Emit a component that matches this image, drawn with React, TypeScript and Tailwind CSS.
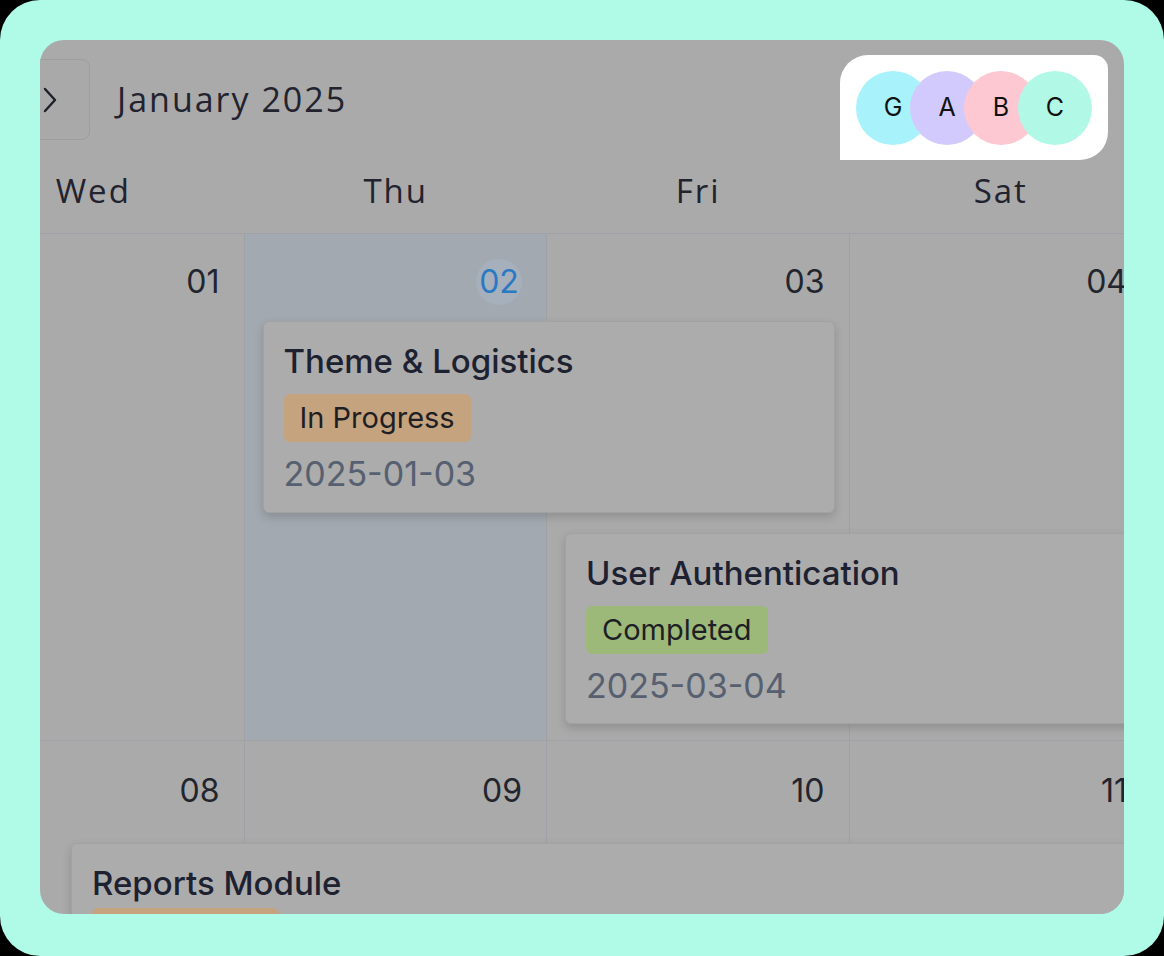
import React from "react";

type Status = "In Progress" | "Completed";

type CalEvent = {
  title: string;
  status: Status;
  date: string;
  className: string;
  badgeGap?: string;
};

const statusStyle: Record<Status, string> = {
  "In Progress": "bg-[#c6a37f]",
  Completed: "bg-[#9cb97a]",
};

const avatars = [
  { letter: "G", color: "bg-[#a8f2fb]" },
  { letter: "A", color: "bg-[#d2cafc]" },
  { letter: "B", color: "bg-[#fdc8d2]" },
  { letter: "C", color: "bg-[#b1f8e6]" },
];

const headFont = { fontFamily: '"Open Sans", "Noto Sans", sans-serif' };
const bodyFont = { fontFamily: 'Inter, "Noto Sans", sans-serif' };

function EventCard({ event }: { event: CalEvent }) {
  return (
    <div
      className={`flex flex-col rounded-[6px] border border-[#a2a2a2] bg-[#acacac] px-[20px] pt-[19px] pb-[20px] shadow-[0_4px_10px_rgba(0,0,0,0.16)] ${event.className}`}
    >
      <div className="text-[33px] leading-[40px] font-medium text-[#1d2130]">{event.title}</div>
      <div className={`${event.badgeGap ?? "mt-[13px]"} flex`}>
        <span
          className={`rounded-[6px] px-[16px] text-[29px] leading-[48px] text-[#1e1f24] ${statusStyle[event.status]}`}
        >
          {event.status}
        </span>
      </div>
      <div className="mt-[12px] text-[34px] leading-[40px] text-[#566070]">{event.date}</div>
    </div>
  );
}

function DayNumber({ n, today, top }: { n: string; today?: boolean; top: string }) {
  return (
    <div className={`flex justify-end pr-[24px] ${top}`}>
      <span
        className={`flex h-[46px] items-center justify-center text-[32px] ${
          today ? "w-[46px] rounded-full bg-[#a5b0bc] text-[#2b79c2]" : "text-[#22252e]"
        }`}
      >
        {n}
      </span>
    </div>
  );
}

function Week({
  days,
  todayIndex,
  rows,
  events,
  height,
  top,
  last,
}: {
  days: string[];
  todayIndex?: number;
  rows: string;
  events: CalEvent[];
  height: string;
  top: string;
  last?: boolean;
}) {
  return (
    <div
      className={`grid grid-cols-[repeat(4,302.5px)] ${rows} ${height} ${last ? "" : "border-b border-[#9ea1a5]"}`}
    >
      {days.map((d, i) => (
        <div
          key={d}
          className={`row-span-full border-r border-[#9ea1a5] ${i === todayIndex ? "bg-[#a3a9b0]" : ""}`}
          style={{ gridColumnStart: i + 1, gridRowStart: 1 }}
        >
          <DayNumber n={d} today={i === todayIndex} top={top} />
        </div>
      ))}
      {events.map((e) => (
        <EventCard key={e.title} event={e} />
      ))}
    </div>
  );
}

export default function App() {
  return (
    <div className="h-[956px] w-[1164px] bg-black">
      <div className="h-full rounded-[40px] bg-[#b0fbe8] px-[40px] pt-[40px]">
        <div className="relative h-[874px] overflow-hidden rounded-[24px] bg-[#aaaaaa]">
          <div className="ml-[-98px] w-[1300px]">
            {/* month header */}
            <div className="flex items-center gap-[27px] pl-[67px] pt-[19px]">
              <button className="flex h-[81px] w-[81px] items-center justify-center rounded-[8px] border border-[#9e9e9e] bg-[#a9a9a9]">
                <svg width="14" height="26" viewBox="0 0 14 26" fill="none">
                  <path d="M2 2l10 11L2 24" stroke="#1f2129" strokeWidth="2.4" strokeLinecap="round" strokeLinejoin="round" />
                </svg>
              </button>
              <h1 className="text-[34px] font-medium tracking-[2px] text-[#22232e]" style={headFont}>
                January 2025
              </h1>
            </div>

            {/* weekday names */}
            <div
              className="grid h-[94px] grid-cols-[repeat(4,302.5px)] items-center border-b border-[#9ea1a5] pt-[8px]"
              style={headFont}
            >
              {["Wed", "Thu", "Fri", "Sat"].map((d) => (
                <div key={d} className="text-center text-[33px] tracking-[2px] text-[#22232e]">
                  {d}
                </div>
              ))}
            </div>

            <div style={bodyFont}>
              <Week
                days={["01", "02", "03", "04"]}
                todayIndex={1}
                top="pt-[25px]"
                height="h-[507px]"
                rows="grid-rows-[87px_192px_20px_191px_1fr]"
                events={[
                  {
                    title: "Theme & Logistics",
                    status: "In Progress",
                    date: "2025-01-03",
                    className: "col-start-2 col-end-4 row-start-2 ml-[18px] mr-[15px]",
                  },
                  {
                    title: "User Authentication",
                    status: "Completed",
                    date: "2025-03-04",
                    className: "col-start-3 col-end-5 row-start-4 ml-[18px]",
                  },
                ]}
              />
              <Week
                days={["08", "09", "10", "11"]}
                top="pt-[27px]"
                height="h-[300px]"
                rows="grid-rows-[102px_192px_1fr]"
                last
                events={[
                  {
                    title: "Reports Module",
                    status: "In Progress",
                    date: "2025-02-10",
                    badgeGap: "mt-[5px]",
                    className: "col-start-1 col-end-5 row-start-2 ml-[129px]",
                  },
                ]}
              />
            </div>
          </div>

          {/* collaborators, above the dimmed calendar */}
          <div className="absolute left-[800px] top-[15px] flex rounded-tl-[28px] rounded-tr-[14px] rounded-br-[28px] bg-white px-[16px] pt-[16px] pb-[15px]">
            {avatars.map((a, i) => (
              <div
                key={a.letter}
                className={`flex h-[74px] w-[74px] items-center justify-center rounded-full text-[25px] text-[#111111] ${a.color} ${i > 0 ? "-ml-[20px]" : ""}`}
                style={bodyFont}
              >
                {a.letter}
              </div>
            ))}
          </div>
        </div>
      </div>
    </div>
  );
}
